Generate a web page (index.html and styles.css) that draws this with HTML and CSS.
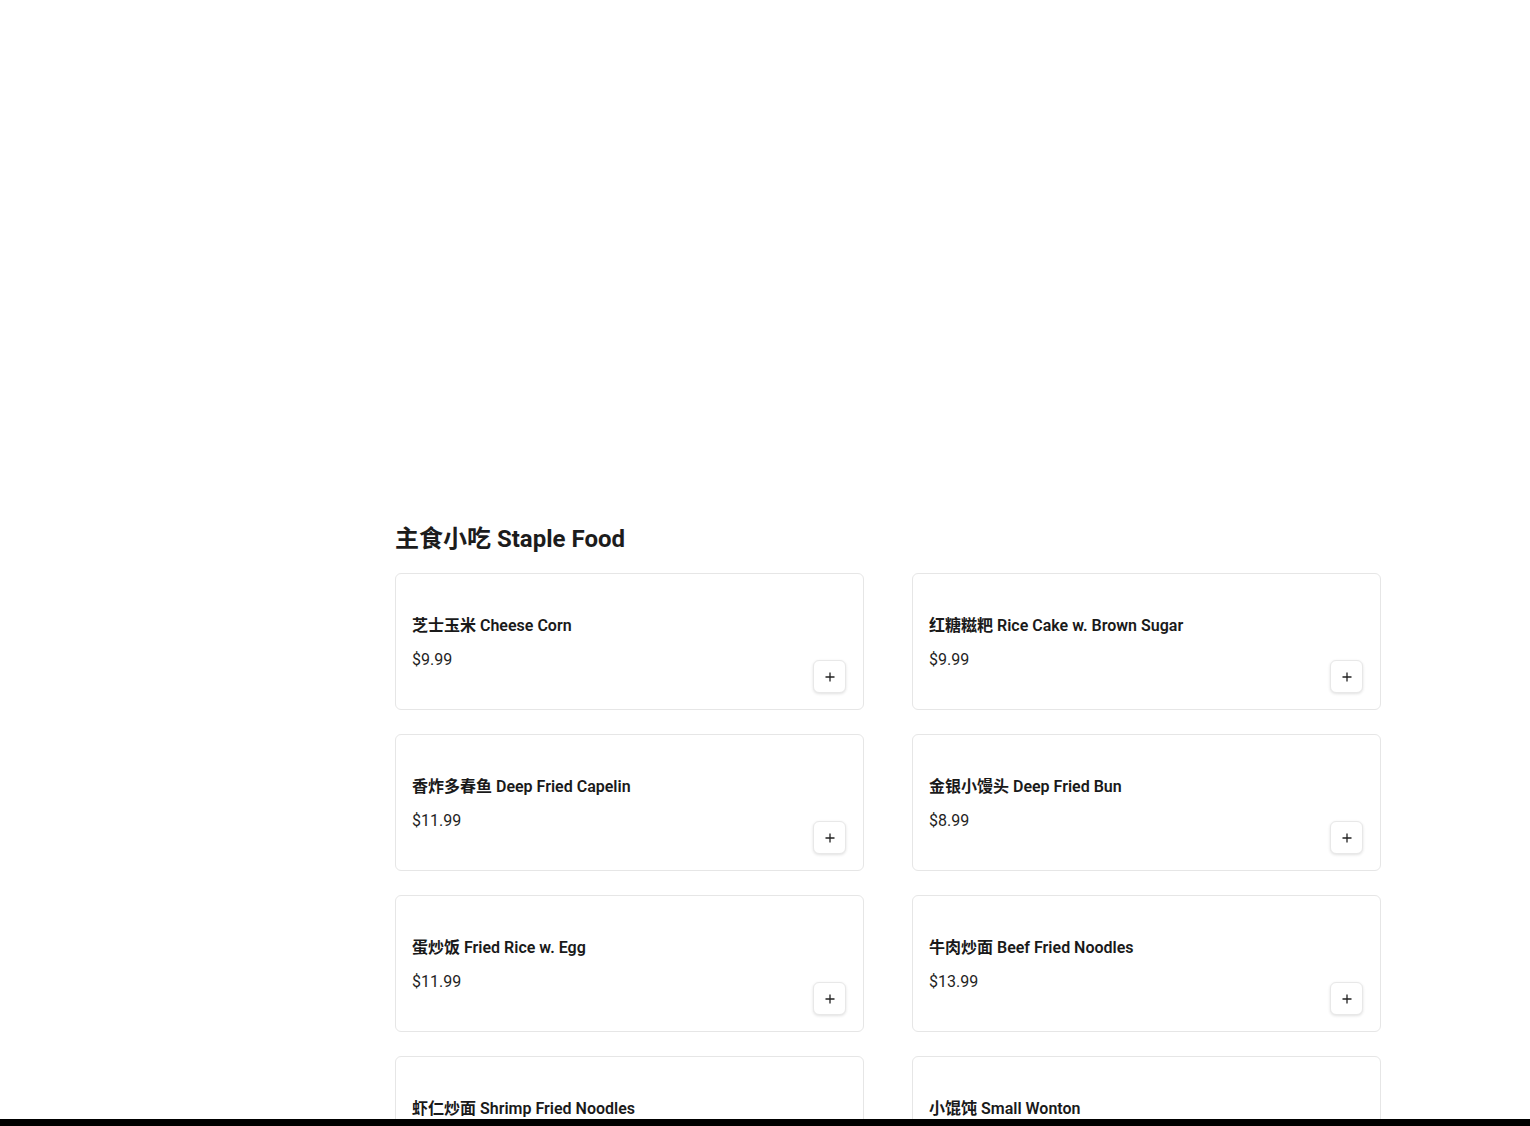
FILE: index.html
```html
<!DOCTYPE html>
<html lang="zh">
<head>
<meta charset="utf-8">
<title>Staple Food</title>
<link rel="stylesheet" href="styles.css">
</head>
<body>
<div class="page">
  <aside class="sidebar"></aside>
  <main class="main">
    <section class="category">
      <h2 class="cat-title">主食小吃 Staple Food</h2>
      <div class="grid">
        <div class="card"><div class="info"><div class="name">芝士玉米 Cheese Corn</div><div class="price">$9.99</div></div><button class="add" aria-label="add"><svg viewBox="0 0 12 12" width="12" height="12"><path d="M6 1.5v9M1.5 6h9" stroke="#222" stroke-width="1.3" fill="none"/></svg></button></div>
        <div class="card"><div class="info"><div class="name">红糖糍粑 Rice Cake w. Brown Sugar</div><div class="price">$9.99</div></div><button class="add" aria-label="add"><svg viewBox="0 0 12 12" width="12" height="12"><path d="M6 1.5v9M1.5 6h9" stroke="#222" stroke-width="1.3" fill="none"/></svg></button></div>
        <div class="card"><div class="info"><div class="name">香炸多春鱼 Deep Fried Capelin</div><div class="price">$11.99</div></div><button class="add" aria-label="add"><svg viewBox="0 0 12 12" width="12" height="12"><path d="M6 1.5v9M1.5 6h9" stroke="#222" stroke-width="1.3" fill="none"/></svg></button></div>
        <div class="card"><div class="info"><div class="name">金银小馒头 Deep Fried Bun</div><div class="price">$8.99</div></div><button class="add" aria-label="add"><svg viewBox="0 0 12 12" width="12" height="12"><path d="M6 1.5v9M1.5 6h9" stroke="#222" stroke-width="1.3" fill="none"/></svg></button></div>
        <div class="card"><div class="info"><div class="name">蛋炒饭 Fried Rice w. Egg</div><div class="price">$11.99</div></div><button class="add" aria-label="add"><svg viewBox="0 0 12 12" width="12" height="12"><path d="M6 1.5v9M1.5 6h9" stroke="#222" stroke-width="1.3" fill="none"/></svg></button></div>
        <div class="card"><div class="info"><div class="name">牛肉炒面 Beef Fried Noodles</div><div class="price">$13.99</div></div><button class="add" aria-label="add"><svg viewBox="0 0 12 12" width="12" height="12"><path d="M6 1.5v9M1.5 6h9" stroke="#222" stroke-width="1.3" fill="none"/></svg></button></div>
        <div class="card"><div class="info"><div class="name">虾仁炒面 Shrimp Fried Noodles</div><div class="price">$13.99</div></div><button class="add" aria-label="add"><svg viewBox="0 0 12 12" width="12" height="12"><path d="M6 1.5v9M1.5 6h9" stroke="#222" stroke-width="1.3" fill="none"/></svg></button></div>
        <div class="card"><div class="info"><div class="name">小馄饨 Small Wonton</div><div class="price">$8.99</div></div><button class="add" aria-label="add"><svg viewBox="0 0 12 12" width="12" height="12"><path d="M6 1.5v9M1.5 6h9" stroke="#222" stroke-width="1.3" fill="none"/></svg></button></div>
      </div>
    </section>
  </main>
</div>
<div class="cart-bar"></div>
</body>
</html>
```

FILE: styles.css
```css
html, body {
  margin: 0;
  padding: 0;
  background: #ffffff;
  font-family: Roboto, "Noto Sans CJK SC", sans-serif;
  color: #1f1f1f;
}

.page {
  width: 1232px;
  margin: 0 149px 0 149px;
  display: grid;
  grid-template-columns: 222px 1fr;
  column-gap: 24px;
}

.main {
  padding-top: 523px;
}

.cat-title {
  margin: 0 0 18px 0;
  font-size: 24px;
  line-height: 32px;
  font-weight: 700;
  color: #1c1c1c;
}

.grid {
  display: grid;
  grid-template-columns: 1fr 1fr;
  column-gap: 48px;
  row-gap: 24px;
}

.card {
  box-sizing: border-box;
  height: 137px;
  border: 1px solid #e6e6e6;
  border-radius: 6px;
  padding: 16px 17px 16px 16px;
  display: flex;
  align-items: center;
  justify-content: space-between;
  background: #fff;
}

.info {
  display: flex;
  flex-direction: column;
  gap: 10px;
  padding-top: 2px;
}

.name {
  font-size: 16px;
  line-height: 24px;
  font-weight: 600;
  color: #1a1a1a;
}

.price {
  font-size: 16px;
  line-height: 24px;
  font-weight: 400;
  color: #1f1f1f;
}

.add {
  align-self: flex-end;
  width: 33px;
  height: 33px;
  box-sizing: border-box;
  padding: 0;
  border: 1px solid #e8e8e8;
  border-radius: 6px;
  background: #fff;
  box-shadow: 0 1px 3px rgba(0, 0, 0, 0.12);
  display: flex;
  align-items: center;
  justify-content: center;
  cursor: pointer;
}

.cart-bar {
  position: fixed;
  left: 0;
  right: 0;
  bottom: 0;
  height: 7px;
  background: #000;
}
```
